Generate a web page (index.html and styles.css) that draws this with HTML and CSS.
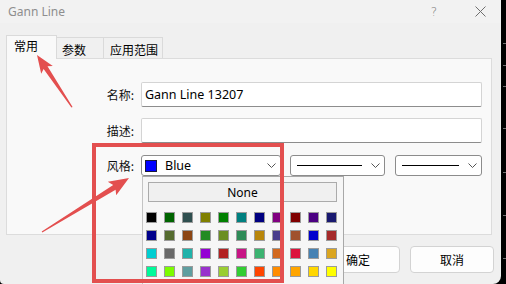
FILE: index.html
```html
<!DOCTYPE html>
<html>
<head>
<meta charset="utf-8">
<link rel="stylesheet" href="styles.css">
</head>
<body>
<div class="screen">
  <div class="dialog">
    <div class="titlebar">
      <span class="title">Gann Line</span>
      <span class="help">?</span>
      <svg class="close" width="11" height="11" viewBox="0 0 11 11"><path d="M0.5 0.5L10.5 10.5M10.5 0.5L0.5 10.5" stroke="#6f6f6f" stroke-width="1" fill="none"/></svg>
    </div>
    <div class="tabs">
      <div class="tab active">常用</div>
      <div class="tab t2">参数</div>
      <div class="tab t3">应用范围</div>
    </div>
    <div class="panel">
      <div class="form">
        <span class="label">名称:</span>
        <div class="input">Gann Line 13207</div>
        <span class="label">描述:</span>
        <div class="input"></div>
        <span class="label">风格:</span>
        <div class="combos">
          <div class="combo c-color">
            <span class="swatch-blue"></span>
            <span class="combo-text">Blue</span>
            <svg class="chev" width="9" height="5" viewBox="0 0 9 5"><path d="M0.5 0.5L4.5 4.5L8.5 0.5" stroke="#555" fill="none"/></svg>
          </div>
          <div class="combo c-line1">
            <span class="line"></span>
            <svg class="chev" width="9" height="5" viewBox="0 0 9 5"><path d="M0.5 0.5L4.5 4.5L8.5 0.5" stroke="#555" fill="none"/></svg>
          </div>
          <div class="combo c-line2">
            <span class="line"></span>
            <svg class="chev" width="9" height="5" viewBox="0 0 9 5"><path d="M0.5 0.5L4.5 4.5L8.5 0.5" stroke="#555" fill="none"/></svg>
          </div>
        </div>
      </div>
    </div>
    <div class="buttons">
      <button class="btn">确定</button>
      <button class="btn">取消</button>
    </div>

    <div class="popup">
      <div class="none-btn">None</div>
      <div class="grid">
        <span class="sw" style="background:#000000"></span>
        <span class="sw" style="background:#006400"></span>
        <span class="sw" style="background:#2F4F4F"></span>
        <span class="sw" style="background:#808000"></span>
        <span class="sw" style="background:#008000"></span>
        <span class="sw" style="background:#008080"></span>
        <span class="sw" style="background:#000080"></span>
        <span class="sw" style="background:#800080"></span>
        <span class="sw" style="background:#800000"></span>
        <span class="sw" style="background:#4B0082"></span>
        <span class="sw" style="background:#191970"></span>

        <span class="sw" style="background:#00008B"></span>
        <span class="sw" style="background:#556B2F"></span>
        <span class="sw" style="background:#8B4513"></span>
        <span class="sw" style="background:#228B22"></span>
        <span class="sw" style="background:#6B8E23"></span>
        <span class="sw" style="background:#2E8B57"></span>
        <span class="sw" style="background:#B8860B"></span>
        <span class="sw" style="background:#483D8B"></span>
        <span class="sw" style="background:#A0522D"></span>
        <span class="sw" style="background:#0000CD"></span>
        <span class="sw" style="background:#A52A2A"></span>

        <span class="sw" style="background:#00CED1"></span>
        <span class="sw" style="background:#696969"></span>
        <span class="sw" style="background:#20B2AA"></span>
        <span class="sw" style="background:#9400D3"></span>
        <span class="sw" style="background:#B22222"></span>
        <span class="sw" style="background:#C71585"></span>
        <span class="sw" style="background:#3CB371"></span>
        <span class="sw" style="background:#D2691E"></span>
        <span class="sw" style="background:#DC143C"></span>
        <span class="sw" style="background:#4682B4"></span>
        <span class="sw" style="background:#DAA520"></span>

        <span class="sw" style="background:#00FA9A"></span>
        <span class="sw" style="background:#7CFC00"></span>
        <span class="sw" style="background:#5F9EA0"></span>
        <span class="sw" style="background:#9932CC"></span>
        <span class="sw" style="background:#9ACD32"></span>
        <span class="sw" style="background:#32CD32"></span>
        <span class="sw" style="background:#FF4500"></span>
        <span class="sw" style="background:#FF8C00"></span>
        <span class="sw" style="background:#FFA500"></span>
        <span class="sw" style="background:#FFD700"></span>
        <span class="sw" style="background:#FFFF00"></span>
      </div>
    </div>

    <div class="annot-rect"></div>
    <svg class="annot-arrows" width="501" height="284" viewBox="0 0 501 284">
      <polygon fill="#e34f4f" points="37,55 52.8,66 47.5,66.2 72.6,107 71.4,107.6 43.6,69 41.2,73.8"/>
      <polygon fill="#e34f4f" points="129,178 116.2,195.3 115.6,189.8 42.3,232.6 41.7,231.4 113.2,185 107.8,181.7"/>
    </svg>
  </div>
  <div class="strip">
    <span class="tick k1"></span>
    <span class="tick k2"></span>
    <span class="tick k3"></span>
    <span class="tick k4"></span>
    <span class="tick k5"></span>
    <span class="tick k6"></span>
    <span class="tick k7"></span>
  </div>
</div>
</body>
</html>
```

FILE: styles.css
```css
* { box-sizing: border-box; }
html, body { margin: 0; padding: 0; }
body {
  background: #000;
  width: 506px;
  height: 284px;
  overflow: hidden;
  font-family: "Noto Sans", "Noto Sans CJK SC", sans-serif;
}
.screen {
  display: flex;
  width: 506px;
  height: 284px;
}
.dialog {
  position: relative;
  width: 501px;
  height: 284px;
  background: #f0f0f0;
  border-bottom-right-radius: 8px;
  border-bottom-left-radius: 4px;
  overflow: hidden;
  display: flex;
  flex-direction: column;
}
.titlebar {
  height: 23px;
  display: flex;
  align-items: center;
  padding-left: 8px;
  background: #f2f2f2;
}
.title {
  font-size: 12px;
  color: #8e8e8e;
}
.help {
  margin-left: auto;
  font-size: 12px;
  color: #7a7a7a;
  font-family: "DejaVu Sans", sans-serif;
  font-weight: 300;
}
.close {
  margin-left: 38px;
  margin-right: 15px;
}
.tabs {
  margin-top: 12px;
  height: 23px;
  display: flex;
  align-items: flex-end;
  padding-left: 6px;
  position: relative;
  z-index: 1;
  font-family: "Noto Sans CJK SC", sans-serif;
  font-size: 12px;
  color: #000;
}
.tab {
  height: 21px;
  border-top: 1px solid #dadada;
  border-left: 1px solid #dadada;
  padding-top: 3px;
  line-height: 14px;
}
.tab.active {
  width: 51px;
  height: 24px;
  margin-bottom: -1px;
  background: #f9f9f9;
  border-right: 1px solid #dadada;
  padding-left: 7px;
  padding-top: 3px;
}
.tab.t2 {
  width: 46px;
  padding-left: 5px;
  padding-top: 5px;
  border-left: none;
}
.tab.t3 {
  width: 60px;
  padding-left: 6px;
  padding-top: 5px;
  border-right: 1px solid #dadada;
}
.panel {
  margin-left: 6px;
  width: 486px;
  height: 177px;
  background: #f9f9f9;
  border: 1px solid #dcdcdc;
  padding-top: 23px;
}
.form {
  display: grid;
  grid-template-columns: 127px 1fr;
  column-gap: 7px;
  row-gap: 11px;
  padding-right: 9px;
  align-items: center;
}
.label {
  text-align: right;
  font-family: "Noto Sans CJK SC", sans-serif;
  font-size: 12px;
  color: #111;
}
.input {
  height: 25px;
  background: #fff;
  border: 1px solid #d4d4d4;
  border-bottom-color: #8d8d8d;
  border-radius: 2px;
  font-size: 12.5px;
  line-height: 23px;
  padding-left: 3px;
  color: #000;
}
.combos {
  display: flex;
  margin-top: 1px;
}
.combo {
  height: 21px;
  background: #fff;
  border: 1px solid #8c8c8c;
  border-radius: 3px;
  display: flex;
  align-items: center;
}
.c-color { width: 140px; padding-left: 3px; }
.c-line1 { width: 95px; margin-left: 9px; padding-left: 6px; }
.c-line2 { width: 87px; margin-left: 10px; padding-left: 6px; }
.swatch-blue {
  width: 12px;
  height: 12px;
  background: #0000ff;
  border: 1px solid #1a1a3a;
}
.combo-text {
  margin-left: 8px;
  font-size: 12.5px;
  color: #000;
}
.chev { margin-left: auto; margin-right: 4px; }
.line {
  height: 1px;
  background: #000;
}
.c-line1 .line { width: 65px; }
.c-line2 .line { width: 57px; }
.buttons {
  margin-top: 11px;
  display: flex;
  justify-content: flex-end;
  gap: 10px;
  padding-right: 7px;
}
.btn {
  width: 84px;
  height: 27px;
  background: #fdfdfd;
  border: 1px solid #d3d3d3;
  border-radius: 4px;
  font-family: "Noto Sans CJK SC", sans-serif;
  font-size: 12px;
  color: #000;
  padding: 0;
}
.popup {
  position: absolute;
  left: 142px;
  top: 176px;
  width: 202px;
  height: 120px;
  background: #f6f6f6;
  border: 1px solid #a8a8a8;
  border-left-color: #c4c4c4;
  padding: 5px 6px 0 5px;
  z-index: 2;
}
.none-btn {
  height: 20px;
  background: #f0f0f0;
  border: 1px solid #ababab;
  text-align: center;
  font-size: 12px;
  line-height: 19px;
  color: #000;
}
.grid {
  margin-top: 10px;
  margin-left: -2px;
  display: grid;
  grid-template-columns: repeat(11, 11px);
  grid-auto-rows: 11px;
  column-gap: 7px;
  row-gap: 7px;
}
.sw {
  width: 11px;
  height: 11px;
  border: 1px solid #9b9b9b;
}
.annot-rect {
  position: absolute;
  left: 92px;
  top: 143px;
  width: 192px;
  height: 140px;
  border: 4px solid #e34f4f;
  z-index: 3;
}
.annot-arrows {
  position: absolute;
  left: 0;
  top: 0;
  z-index: 4;
}
.strip {
  position: relative;
  width: 5px;
  height: 284px;
  background: #000;
}
.tick {
  position: absolute;
  right: 0;
  width: 3px;
  height: 1px;
  background: #6e6e6e;
}
.k1 { top: 43px; }
.k2 { top: 65px; }
.k3 { top: 86px; }
.k4 { top: 128px; }
.k5 { top: 172px; }
.k6 { top: 215px; }
.k7 { top: 258px; }
```
